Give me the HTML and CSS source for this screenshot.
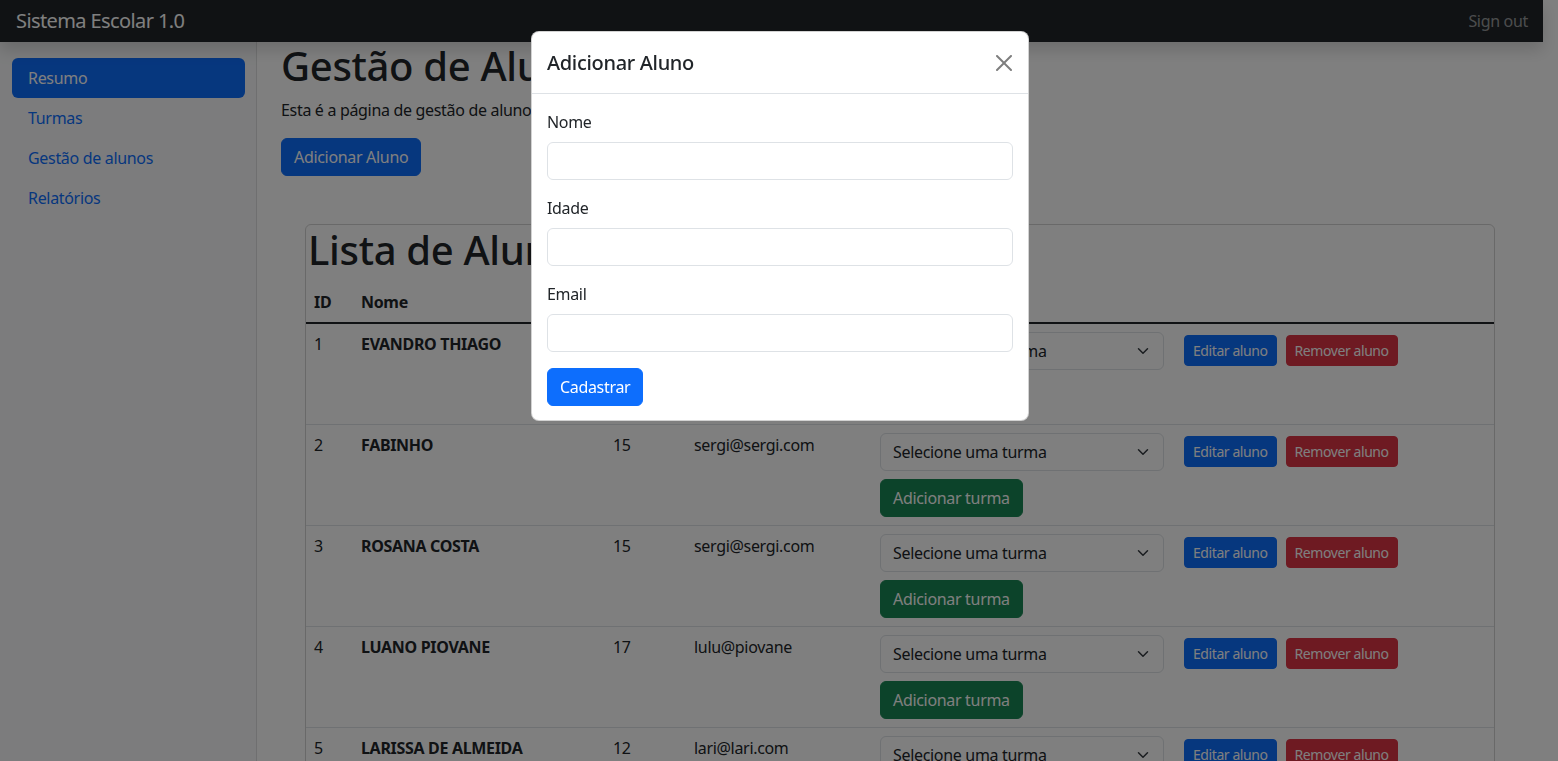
FILE: index.html
```html
<!DOCTYPE html>
<html lang="pt-BR">
<head>
<meta charset="utf-8">
<title>Sistema Escolar 1.0</title>
<link rel="stylesheet" href="styles.css">
</head>
<body>
<header class="navbar">
  <a class="brand" href="#">Sistema Escolar 1.0</a>
  <a class="signout" href="#">Sign out</a>
</header>
<div class="layout">
  <nav class="sidebar">
    <ul class="nav">
      <li><a class="nav-link active" href="#">Resumo</a></li>
      <li><a class="nav-link" href="#">Turmas</a></li>
      <li><a class="nav-link" href="#">Gestão de alunos</a></li>
      <li><a class="nav-link" href="#">Relatórios</a></li>
    </ul>
  </nav>
  <main class="main">
    <h1 class="page-title">Gestão de Alunos</h1>
    <p class="lead-text">Esta é a página de gestão de alunos</p>
    <button class="btn btn-primary">Adicionar Aluno</button>

    <section class="card">
      <h1 class="card-title">Lista de Alunos</h1>
      <table class="table">
        <thead>
          <tr>
            <th class="c-id">ID</th>
            <th class="c-nome">Nome</th>
            <th class="c-idade">Idade</th>
            <th class="c-email">Email</th>
            <th class="c-turma">Turma</th>
            <th class="c-acoes"></th>
          </tr>
        </thead>
        <tbody>
          <tr>
            <td>1</td><td class="strong">EVANDRO THIAGO</td><td>15</td><td>sergi@sergi.com</td>
            <td><div class="select-box"><span>Selecione uma turma</span><svg viewBox="0 0 16 16" width="16" height="16"><path d="m2 5 6 6 6-6" fill="none" stroke="#343a40" stroke-width="2" stroke-linecap="round" stroke-linejoin="round"/></svg></div><button class="btn btn-success">Adicionar turma</button></td>
            <td><div class="actions"><button class="btn btn-sm btn-primary">Editar aluno</button><button class="btn btn-sm btn-danger">Remover aluno</button></div></td>
          </tr>
          <tr>
            <td>2</td><td class="strong">FABINHO</td><td>15</td><td>sergi@sergi.com</td>
            <td><div class="select-box"><span>Selecione uma turma</span><svg viewBox="0 0 16 16" width="16" height="16"><path d="m2 5 6 6 6-6" fill="none" stroke="#343a40" stroke-width="2" stroke-linecap="round" stroke-linejoin="round"/></svg></div><button class="btn btn-success">Adicionar turma</button></td>
            <td><div class="actions"><button class="btn btn-sm btn-primary">Editar aluno</button><button class="btn btn-sm btn-danger">Remover aluno</button></div></td>
          </tr>
          <tr>
            <td>3</td><td class="strong">ROSANA COSTA</td><td>15</td><td>sergi@sergi.com</td>
            <td><div class="select-box"><span>Selecione uma turma</span><svg viewBox="0 0 16 16" width="16" height="16"><path d="m2 5 6 6 6-6" fill="none" stroke="#343a40" stroke-width="2" stroke-linecap="round" stroke-linejoin="round"/></svg></div><button class="btn btn-success">Adicionar turma</button></td>
            <td><div class="actions"><button class="btn btn-sm btn-primary">Editar aluno</button><button class="btn btn-sm btn-danger">Remover aluno</button></div></td>
          </tr>
          <tr>
            <td>4</td><td class="strong">LUANO PIOVANE</td><td>17</td><td>lulu@piovane</td>
            <td><div class="select-box"><span>Selecione uma turma</span><svg viewBox="0 0 16 16" width="16" height="16"><path d="m2 5 6 6 6-6" fill="none" stroke="#343a40" stroke-width="2" stroke-linecap="round" stroke-linejoin="round"/></svg></div><button class="btn btn-success">Adicionar turma</button></td>
            <td><div class="actions"><button class="btn btn-sm btn-primary">Editar aluno</button><button class="btn btn-sm btn-danger">Remover aluno</button></div></td>
          </tr>
          <tr>
            <td>5</td><td class="strong">LARISSA DE ALMEIDA</td><td>12</td><td>lari@lari.com</td>
            <td><div class="select-box"><span>Selecione uma turma</span><svg viewBox="0 0 16 16" width="16" height="16"><path d="m2 5 6 6 6-6" fill="none" stroke="#343a40" stroke-width="2" stroke-linecap="round" stroke-linejoin="round"/></svg></div><button class="btn btn-success">Adicionar turma</button></td>
            <td><div class="actions"><button class="btn btn-sm btn-primary">Editar aluno</button><button class="btn btn-sm btn-danger">Remover aluno</button></div></td>
          </tr>
        </tbody>
      </table>
    </section>
  </main>
</div>

<div class="backdrop"></div>
<div class="modal" role="dialog" aria-modal="true">
  <div class="modal-content">
    <div class="modal-header">
      <h5 class="modal-title">Adicionar Aluno</h5>
      <button class="btn-close" aria-label="Close">
        <svg viewBox="0 0 16 16" width="16" height="16"><path d="M.293.293a1 1 0 0 1 1.414 0L8 6.586 14.293.293a1 1 0 1 1 1.414 1.414L9.414 8l6.293 6.293a1 1 0 0 1-1.414 1.414L8 9.414l-6.293 6.293a1 1 0 0 1-1.414-1.414L6.586 8 .293 1.707a1 1 0 0 1 0-1.414z" fill="#000"/></svg>
      </button>
    </div>
    <form class="modal-body">
      <div class="field">
        <label class="form-label" for="nome">Nome</label>
        <input class="form-control" id="nome" type="text">
      </div>
      <div class="field">
        <label class="form-label" for="idade">Idade</label>
        <input class="form-control" id="idade" type="text">
      </div>
      <div class="field">
        <label class="form-label" for="email">Email</label>
        <input class="form-control" id="email" type="text">
      </div>
      <button class="btn btn-primary" type="button">Cadastrar</button>
    </form>
  </div>
</div>
</body>
</html>
```

FILE: styles.css
```css
* { box-sizing: border-box; }

html, body { height: 100%; }

body {
  margin: 0;
  padding-right: 15px;
  overflow: hidden;
  font-family: "Noto Sans", "Open Sans", "Liberation Sans", sans-serif;
  font-size: 16px;
  line-height: 1.5;
  letter-spacing: -0.02em;
  color: #212529;
  background: #fff;
  display: flex;
  flex-direction: column;
}

a { text-decoration: none; }

/* Navbar */
.navbar {
  position: relative;
  z-index: 2;
  height: 42px;
  flex: 0 0 42px;
  background: #212529;
  display: flex;
  align-items: center;
  justify-content: space-between;
  padding: 0 15px 0 16px;
  box-shadow: 0 .5rem 1rem rgba(0,0,0,.15);
}
.brand {
  color: #fff;
  font-size: 20px;
  line-height: 30px;
  letter-spacing: -0.03em;
}
.signout {
  color: rgba(255,255,255,.55);
  font-size: 16px;
}

/* Layout */
.layout {
  flex: 1;
  display: flex;
  min-height: 0;
}
.sidebar {
  width: 257px;
  flex: 0 0 257px;
  background: #f8f9fa;
  box-shadow: inset -1px 0 0 rgba(0,0,0,.1);
  padding: 16px 12px 0;
}
.nav {
  list-style: none;
  margin: 0;
  padding: 0;
}
.nav-link {
  display: block;
  padding: 8px 16px;
  color: #0d6efd;
  border-radius: 6px;
  font-size: 16px;
}
.nav-link.active {
  background: #0d6efd;
  color: #fff;
}

.main {
  flex: 1;
  min-width: 0;
  padding: 0 24px;
}
.page-title {
  margin: 0 0 8px;
  font-size: 40px;
  font-weight: 500;
  line-height: 1.2;
}
.lead-text {
  margin: 0 0 16px;
}

/* Buttons */
.btn {
  display: inline-block;
  font-family: inherit;
  font-size: 16px;
  line-height: 1.5;
  letter-spacing: inherit;
  padding: 6px 12px;
  border: 1px solid transparent;
  border-radius: 6px;
  color: #fff;
  cursor: pointer;
}
.btn-primary { background: #0d6efd; border-color: #0d6efd; }
.btn-success { background: #198754; border-color: #198754; }
.btn-danger { background: #dc3545; border-color: #dc3545; }
.btn-sm {
  font-size: 14px;
  padding: 4px 8px;
  border-radius: 4px;
  letter-spacing: -0.03em;
}

/* Card + table */
.card {
  margin: 48px 24px 0;
  border: 1px solid rgba(0,0,0,.175);
  border-radius: 6px;
  padding-top: 1px;
}
.card-title {
  margin: 0 0 8px 2px;
  font-size: 40px;
  font-weight: 500;
  line-height: 1.2;
}
.table {
  width: 100%;
  table-layout: fixed;
  border-collapse: collapse;
}
.table th {
  text-align: left;
  font-weight: 700;
  padding: 8px;
  border-bottom: 2px solid #212529;
}
.table td {
  padding: 8px;
  vertical-align: top;
  border-bottom: 1px solid #dee2e6;
}
.table .strong { font-weight: 700; }
.c-id { width: 47px; }
.c-nome { width: 252px; }
.c-idade { width: 81px; }
.c-email { width: 186px; }
.c-turma { width: 304px; }

.select-box {
  width: 284px;
  height: 38px;
  display: flex;
  align-items: center;
  justify-content: space-between;
  padding: 0 12px;
  border: 1px solid #dee2e6;
  border-radius: 6px;
  background: #fff;
  margin-bottom: 8px;
}
.select-box svg { width: 16px; height: 12px; }

.actions {
  display: flex;
  gap: 9px;
  margin-top: 3px;
}

/* Modal overlay */
.backdrop {
  position: fixed;
  inset: 0;
  background: rgba(0,0,0,.5);
  z-index: 10;
}
.modal {
  position: fixed;
  inset: 0;
  z-index: 11;
  display: flex;
  justify-content: center;
  align-items: flex-start;
  padding-top: 31px;
}
.modal-content {
  width: 498px;
  margin-left: 2px;
  background: #fff;
  border-radius: 8px;
  border: 1px solid rgba(0,0,0,.175);
  overflow: hidden;
}
.modal-header {
  display: flex;
  align-items: center;
  justify-content: space-between;
  height: 62px;
  padding: 0 15px;
  border-bottom: 1px solid #dee2e6;
}
.modal-title {
  margin: 0;
  font-size: 20px;
  font-weight: 500;
  line-height: 1.5;
}
.btn-close {
  width: 24px;
  height: 24px;
  padding: 4px;
  border: 0;
  background: transparent;
  opacity: .5;
  display: flex;
  align-items: center;
  justify-content: center;
  margin-right: -3px;
}
.btn-close svg { width: 16px; height: 16px; }
.modal-body {
  padding: 16px 15px 14px;
}
.field { margin-bottom: 16px; }
.form-label {
  display: block;
  margin-bottom: 8px;
}
.form-control {
  display: block;
  width: 100%;
  height: 38px;
  padding: 6px 12px;
  font-family: inherit;
  font-size: 16px;
  border: 1px solid #dee2e6;
  border-radius: 6px;
  background: #fff;
}
```
